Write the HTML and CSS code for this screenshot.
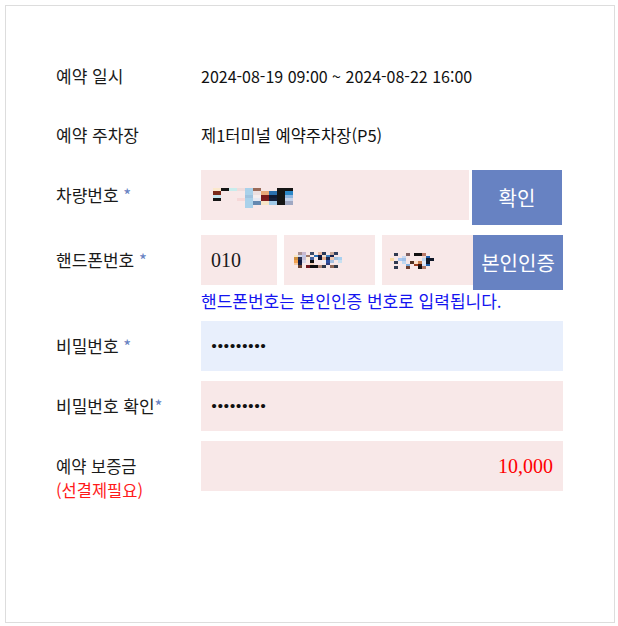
FILE: index.html
```html
<!DOCTYPE html>
<html lang="ko">
<head>
<meta charset="utf-8">
<title>예약 확인</title>
<link rel="stylesheet" href="styles.css">
</head>
<body>
<div class="panel">
  <div class="form">
    <div class="label label-first">예약 일시</div>
    <div class="value value-text value-first">2024-08-19 09:00 ~ 2024-08-22 16:00</div>

    <div class="label">예약 주차장</div>
    <div class="value value-text value-place">제1터미널 예약주차장(P5)</div>

    <div class="label">차량번호&nbsp;<span class="req">*</span></div>
    <div class="value">
      <div class="group group-car">
        <div class="field field-car">
          <svg class="mosaic mosaic-car" width="80" height="20" viewBox="0 0 10 6" preserveAspectRatio="none" shape-rendering="crispEdges">
            <rect x="0" y="0" width="1" height="1" fill="#fbe8cc"/>
            <rect x="1" y="0" width="1" height="1" fill="#151515"/>
            <rect x="2" y="0" width="1" height="1" fill="#c9ecec"/>
            <rect x="3" y="0" width="1" height="1" fill="#efdcdc"/>
            <rect x="4" y="0" width="1" height="6" fill="#a9d1ea"/>
            <rect x="5" y="0" width="1" height="1" fill="#9a6a58"/>
            <rect x="8" y="0" width="2" height="1" fill="#151515"/>
            <rect x="0" y="1" width="1" height="1" fill="#7a2a1a"/>
            <rect x="5" y="1" width="1" height="1" fill="#ece0e0"/>
            <rect x="6" y="1" width="1" height="1" fill="#e8a878"/>
            <rect x="7" y="1" width="1" height="1" fill="#2a6fae"/>
            <rect x="8" y="1" width="1" height="4" fill="#151515"/>
            <rect x="9" y="1" width="1" height="1" fill="#2c88c8"/>
            <rect x="0" y="2" width="1" height="1" fill="#c4e6f0"/>
            <rect x="4" y="2" width="1" height="1" fill="#9fc3df"/>
            <rect x="5" y="2" width="1" height="1" fill="#f4eeee"/>
            <rect x="6" y="2" width="1" height="1" fill="#7a1a1a"/>
            <rect x="7" y="2" width="1" height="1" fill="#0f1a34"/>
            <rect x="9" y="2" width="1" height="1" fill="#8fb6e0"/>
            <rect x="0" y="3" width="1" height="1" fill="#151515"/>
            <rect x="3" y="3" width="1" height="1" fill="#f6d8d8"/>
            <rect x="5" y="3" width="1" height="1" fill="#e4e8f2"/>
            <rect x="6" y="3" width="1" height="1" fill="#7e1c1c"/>
            <rect x="7" y="3" width="1" height="1" fill="#14203c"/>
            <rect x="9" y="3" width="1" height="1" fill="#c4d2ea"/>
            <rect x="5" y="4" width="1" height="1" fill="#6488b0"/>
            <rect x="6" y="4" width="1" height="1" fill="#f8e6c8"/>
            <rect x="7" y="4" width="1" height="1" fill="#a2cae8"/>
            <rect x="9" y="4" width="1" height="1" fill="#a0a8c2"/>
          </svg>
        </div>
        <div class="btn">확인</div>
      </div>
    </div>

    <div class="label">핸드폰번호&nbsp;<span class="req">*</span></div>
    <div class="value">
      <div class="group group-phone">
        <div class="field field-p1"><span class="field-text">010</span></div>
        <div class="field field-p2">
          <svg class="mosaic mosaic-p2" width="48" height="16" viewBox="0 0 12 6" preserveAspectRatio="none" shape-rendering="crispEdges">
            <rect x="1" y="0" width="1" height="1" fill="#a89090"/>
            <rect x="2" y="0" width="1" height="1" fill="#c8b8d0"/>
            <rect x="4" y="0" width="1" height="1" fill="#3a4a6a"/>
            <rect x="6" y="0" width="1" height="1" fill="#e8b8a0"/>
            <rect x="7" y="0" width="1" height="1" fill="#2a3a5a"/>
            <rect x="9" y="0" width="1" height="1" fill="#c8a898"/>
            <rect x="10" y="0" width="1" height="1" fill="#304060"/>
            <rect x="0" y="1" width="1" height="1" fill="#f8e8c8"/>
            <rect x="1" y="1" width="1" height="1" fill="#d0d8f0"/>
            <rect x="2" y="1" width="1" height="1" fill="#c0c8e8"/>
            <rect x="3" y="1" width="1" height="1" fill="#a07868"/>
            <rect x="5" y="1" width="1" height="1" fill="#2870b8"/>
            <rect x="6" y="1" width="1" height="1" fill="#101848"/>
            <rect x="7" y="1" width="1" height="1" fill="#f0e0d0"/>
            <rect x="8" y="1" width="1" height="1" fill="#4080c0"/>
            <rect x="9" y="1" width="1" height="1" fill="#102050"/>
            <rect x="0" y="2" width="1" height="1" fill="#d09040"/>
            <rect x="1" y="2" width="1" height="1" fill="#283050"/>
            <rect x="2" y="2" width="1" height="1" fill="#c8c0d8"/>
            <rect x="3" y="2" width="1" height="1" fill="#fcecd8"/>
            <rect x="4" y="2" width="1" height="1" fill="#4060a0"/>
            <rect x="6" y="2" width="1" height="1" fill="#101830"/>
            <rect x="7" y="2" width="1" height="1" fill="#e8b090"/>
            <rect x="8" y="2" width="1" height="1" fill="#1a2850"/>
            <rect x="9" y="2" width="1" height="1" fill="#f0c8b0"/>
            <rect x="10" y="2" width="1" height="1" fill="#a0c0e0"/>
            <rect x="11" y="2" width="1" height="1" fill="#a8d0f0"/>
            <rect x="0" y="3" width="1" height="1" fill="#f0a050"/>
            <rect x="1" y="3" width="1" height="1" fill="#101840"/>
            <rect x="2" y="3" width="1" height="1" fill="#d8d8e8"/>
            <rect x="4" y="3" width="1" height="1" fill="#101010"/>
            <rect x="7" y="3" width="1" height="1" fill="#f0f0f8"/>
            <rect x="8" y="3" width="1" height="1" fill="#3050a0"/>
            <rect x="9" y="3" width="1" height="1" fill="#a8c0e0"/>
            <rect x="11" y="3" width="1" height="1" fill="#c8e0f0"/>
            <rect x="0" y="4" width="1" height="1" fill="#f8c8a0"/>
            <rect x="1" y="4" width="1" height="1" fill="#182040"/>
            <rect x="4" y="4" width="1" height="1" fill="#f0d0b8"/>
            <rect x="8" y="4" width="1" height="1" fill="#304080"/>
            <rect x="1" y="5" width="1" height="1" fill="#6a4030"/>
            <rect x="3" y="5" width="1" height="1" fill="#701820"/>
            <rect x="4" y="5" width="2" height="1" fill="#101010"/>
            <rect x="6" y="5" width="1" height="1" fill="#b08878"/>
            <rect x="7" y="5" width="1" height="1" fill="#303848"/>
            <rect x="9" y="5" width="1" height="1" fill="#906858"/>
            <rect x="10" y="5" width="1" height="1" fill="#303848"/>
          </svg>
        </div>
        <div class="field field-p3">
          <svg class="mosaic mosaic-p3" width="44" height="16" viewBox="0 0 11 6" preserveAspectRatio="none" shape-rendering="crispEdges">
            <rect x="1" y="0" width="1" height="1" fill="#303a50"/>
            <rect x="4" y="0" width="1" height="1" fill="#806060"/>
            <rect x="6" y="0" width="2" height="1" fill="#101010"/>
            <rect x="8" y="0" width="1" height="1" fill="#b87868"/>
            <rect x="3" y="1" width="1" height="1" fill="#c8d8f0"/>
            <rect x="8" y="1" width="1" height="1" fill="#f0d8d0"/>
            <rect x="9" y="1" width="1" height="1" fill="#2060b0"/>
            <rect x="0" y="2" width="1" height="1" fill="#f8dca8"/>
            <rect x="2" y="2" width="1" height="1" fill="#a8c8f0"/>
            <rect x="3" y="2" width="1" height="1" fill="#a0c0e8"/>
            <rect x="8" y="2" width="1" height="1" fill="#c0d8f0"/>
            <rect x="9" y="2" width="2" height="1" fill="#101828"/>
            <rect x="1" y="3" width="1" height="1" fill="#303a50"/>
            <rect x="3" y="3" width="1" height="1" fill="#c0d8f0"/>
            <rect x="5" y="3" width="1" height="1" fill="#503020"/>
            <rect x="6" y="3" width="1" height="1" fill="#fce0c8"/>
            <rect x="7" y="3" width="1" height="1" fill="#c88050"/>
            <rect x="8" y="3" width="1" height="1" fill="#e0e8f8"/>
            <rect x="9" y="3" width="1" height="1" fill="#101828"/>
            <rect x="4" y="4" width="1" height="1" fill="#80b0e0"/>
            <rect x="6" y="4" width="1" height="1" fill="#a04020"/>
            <rect x="7" y="4" width="1" height="1" fill="#301010"/>
            <rect x="8" y="4" width="1" height="1" fill="#d0e0f8"/>
            <rect x="9" y="4" width="1" height="1" fill="#2060a8"/>
            <rect x="1" y="5" width="1" height="1" fill="#303a50"/>
            <rect x="4" y="5" width="1" height="1" fill="#704030"/>
            <rect x="7" y="5" width="1" height="1" fill="#101010"/>
            <rect x="8" y="5" width="1" height="1" fill="#b07868"/>
          </svg>
        </div>
        <div class="btn">본인인증</div>
      </div>
      <p class="hint">핸드폰번호는 본인인증 번호로 입력됩니다.</p>
    </div>

    <div class="label">비밀번호&nbsp;<span class="req">*</span></div>
    <div class="value">
      <div class="field field-full field-focus"><span class="dots">•••••••••</span></div>
    </div>

    <div class="label">비밀번호 확인<span class="req">*</span></div>
    <div class="value">
      <div class="field field-full"><span class="dots">•••••••••</span></div>
    </div>

    <div class="label label-multi">
      <span class="label-line">예약 보증금</span>
      <span class="label-line note">(선결제필요)</span>
    </div>
    <div class="value">
      <div class="field field-full field-amount"><span class="amount">10,000</span></div>
    </div>
  </div>
</div>
</body>
</html>
```

FILE: styles.css
```css
html, body {
  margin: 0;
  padding: 0;
  background: #ffffff;
}

body {
  font-family: "Noto Sans CJK KR", "Noto Sans", sans-serif;
  color: #1a1a1a;
  font-size: 16px;
}

.panel {
  box-sizing: border-box;
  width: 610px;
  height: 618px;
  margin: 5px;
  border: 1px solid #dddddd;
  background: #ffffff;
}

.form {
  display: grid;
  grid-template-columns: 145px 362px;
  row-gap: 10px;
  padding: 45px 0 0 50px;
}

.label {
  box-sizing: border-box;
  height: 50px;
  align-self: start;
  display: flex;
  align-items: center;
  white-space: nowrap;
  font-size: 17px;
  line-height: 22px;
  color: #1a1a1a;
}

.req {
  color: #6782c2;
}

.label-multi {
  display: block;
  height: auto;
  padding-top: 13px;
  font-size: 16.5px;
}

.label-line {
  display: block;
  height: 24px;
  line-height: 24px;
}

.note {
  color: #ff1a1a;
}

.value {
  display: flex;
  flex-direction: column;
}

.value-text {
  height: 50px;
  justify-content: center;
  font-size: 16px;
  color: #111111;
  white-space: nowrap;
}

.value-place {
  font-size: 16.5px;
}

.label-first,
.value-first {
  height: 49px;
}

.group {
  display: flex;
  align-items: flex-start;
}

.group-car {
  gap: 3px;
}

.field {
  box-sizing: border-box;
  height: 50px;
  background: #f8e8e8;
  display: flex;
  align-items: center;
  padding-left: 10px;
}

.field-car {
  width: 268px;
  align-items: flex-start;
  padding-left: 12px;
  padding-top: 18px;
}

.field-p1 {
  width: 76px;
  margin-right: 7px;
}

.field-p2 {
  width: 91px;
  margin-right: 7px;
  align-items: flex-start;
  padding-top: 17px;
}

.field-p3 {
  width: 91px;
  align-items: flex-start;
  padding-left: 8px;
  padding-top: 18px;
}

.mosaic {
  display: block;
}

.field-text {
  font-family: "Liberation Serif", serif;
  font-size: 20px;
  color: #1a1a1a;
}

.field-full {
  width: 362px;
}

.field-focus {
  background: #e8effc;
}

.dots {
  font-family: "Liberation Serif", serif;
  font-size: 17.5px;
  color: #111111;
}

.field-amount {
  justify-content: flex-end;
  padding-right: 10px;
}

.amount {
  font-family: "Liberation Serif", serif;
  font-size: 20px;
  color: #ff0000;
}

.btn {
  box-sizing: border-box;
  width: 90px;
  height: 55px;
  background: #6782c2;
  color: #ffffff;
  font-size: 20px;
  display: flex;
  align-items: center;
  justify-content: center;
  white-space: nowrap;
}

.hint {
  margin: 0;
  font-size: 17px;
  line-height: 21px;
  color: #1414f0;
  white-space: nowrap;
}
```
